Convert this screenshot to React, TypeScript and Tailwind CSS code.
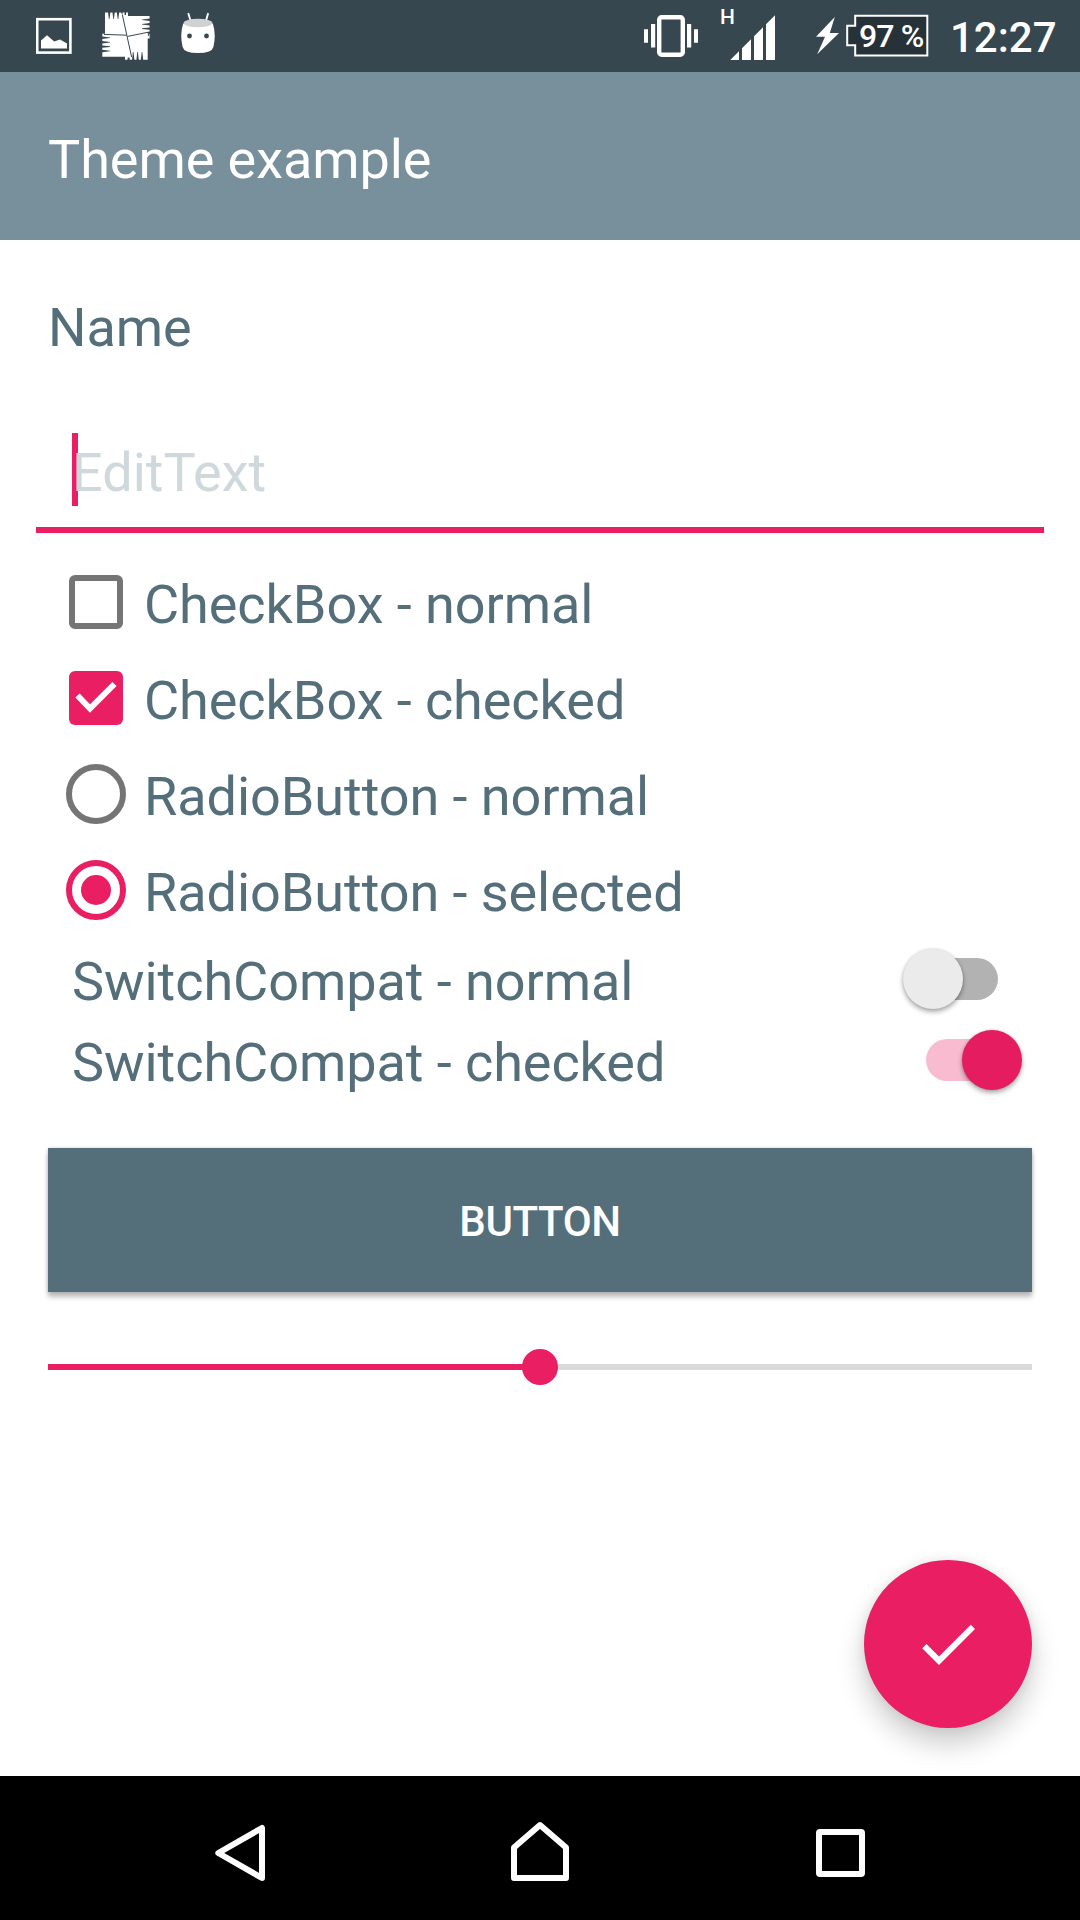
import React from "react";

const label = "text-[54px] leading-[63px] tracking-[-0.06px] text-[#546e7a] whitespace-nowrap";

function GalleryIcon() {
  return (
    <svg className="ml-9 h-[72px] w-9 shrink-0" viewBox="36 0 36 72" fill="none">
      <rect x="37.2" y="19.2" width="33.2" height="33.4" stroke="#fff" strokeWidth="2.6" />
      <path d="M41 48.6V40.5L47 35.3L54.2 41.6L60 39.4L67 43.6V48.6Z" fill="#fff" />
    </svg>
  );
}

function PatchworkIcon() {
  return (
    <svg className="ml-[30px] h-[72px] w-12 shrink-0" viewBox="102 0 48 72">
      <g fill="#fff">
        <path d="M105 12.6H128V16H149.6V38.4H147.7V59.7H125V56.8H102.3V33.8H105Z" />
      </g>
      <g fill="#37474f">
        <path d="M108 12H110.4L109.5 19H108.9ZM112.4 12H114.8L113.9 19H113.3ZM116.8 12H119.2L118.3 19H117.7ZM121 12H122.6L122.4 15.4ZM124.6 12H126V15H124.6Z" />
        <path d="M150 18.6V21L142 20.1V19.5ZM150 23V25.4L142 24.5V23.9ZM150 27.4V29.8L142 28.9V28.3ZM150 31.6V34.2L147.6 33V32Z" />
        <path d="M102 36.6V39L110 38.1V37.5ZM102 41V43.4L110 42.5V41.9ZM102 45.4V47.8L110 46.9V46.3ZM102 49.8V52.2L110 51.3V50.7Z" />
        <path d="M132 60H134.4L133.5 52H132.9ZM136.4 60H138.8L137.9 52H137.3ZM140.8 60H143.2L142.3 52H141.7ZM127.4 60H129.8L129.4 57.4H127.8Z" />
      </g>
      <path d="M122.4 15L131.6 57M104 34.4L126.8 35.2M127.6 36.4L148.4 32.2V36" fill="none" stroke="#37474f" strokeWidth="1" />
    </svg>
  );
}

function DroidIcon() {
  return (
    <svg className="ml-[30px] h-[72px] w-9 shrink-0" viewBox="180 0 36 72">
      <path d="M188.4 13.8L191 22M208 13.8L205.6 22" stroke="#fff" strokeWidth="1.9" strokeLinecap="round" />
      <path d="M183.2 23.5Q179.6 34 182.6 47Q184 53 198 53Q212 53 213.4 47Q216.4 34 212.8 23.5Z" fill="#fff" />
      <ellipse cx="198" cy="23" rx="14.4" ry="4.2" fill="#cfd1d2" />
      <circle cx="189.5" cy="36" r="2.4" fill="#37474f" />
      <circle cx="206.5" cy="36" r="2.4" fill="#37474f" />
    </svg>
  );
}

function VibrateIcon() {
  return (
    <svg className="h-[72px] w-[54px] shrink-0" viewBox="644 0 54 72">
      <rect x="659.2" y="17.2" width="23.6" height="37.6" rx="2.5" fill="none" stroke="#fff" strokeWidth="4.4" />
      <path d="M651 24h4.2v23.5H651zM687 24h4.2v23.5H687zM644 29.2h4v13.6h-4zM694 29.2h4v13.6h-4z" fill="#fff" />
    </svg>
  );
}

function SignalIcon() {
  return (
    <div className="relative ml-[21px] h-[72px] w-14 shrink-0">
      <span className="absolute top-[5px] left-px text-[21px] leading-[24px] font-medium">H</span>
      <svg className="h-[72px] w-14" viewBox="719 0 56 72" fill="#fff">
        <path d="M730.2 60L739 51.2V60ZM742 48.2L751 39.2V60H742ZM754 36.2L763 27.2V60H754ZM766 24.2L775 15.2V60H766Z" />
      </svg>
    </div>
  );
}

function Battery() {
  return (
    <>
      <svg className="ml-10 h-[72px] w-6 shrink-0" viewBox="815 0 24 72" fill="#fff">
        <path d="M834.8 17L816 36.8H825L817.2 54.2L839 33H829.8Z" />
      </svg>
      <div className="relative ml-[7px] flex h-[72px] w-[83px] shrink-0 items-center pl-[13px]">
        <svg className="absolute inset-0 h-[72px] w-[83px]" viewBox="846 0 83 72">
          <path d="M855.2 15.8H927.3V55.6H855.2V45.2H847.2V25.8H855.2Z" fill="#263238" stroke="#fff" strokeWidth="2" />
        </svg>
        <span className="relative text-[32px] leading-[36px] font-medium tracking-[-0.9px] whitespace-nowrap">97 %</span>
      </div>
    </>
  );
}

function StatusBar() {
  return (
    <div className="flex h-[72px] shrink-0 items-center bg-[#37474f] text-white">
      <GalleryIcon />
      <PatchworkIcon />
      <DroidIcon />
      <div className="flex-1" />
      <VibrateIcon />
      <SignalIcon />
      <Battery />
      <span className="mr-[23px] ml-[21px] w-[107px] pt-[4px] text-[42px] leading-[50px] font-medium whitespace-nowrap">12:27</span>
    </div>
  );
}

function CheckBox({ checked, children }: { checked?: boolean; children: React.ReactNode }) {
  return (
    <div className="flex h-24 items-center pl-[69px]">
      <svg className="size-[54px] shrink-0" viewBox="0 0 54 54" fill="none">
        {checked ? (
          <>
            <rect width="54" height="54" rx="6" fill="#e91e63" />
            <path d="M8.5 24.5L21 37.5L45.5 13" stroke="#fff" strokeWidth="6" />
          </>
        ) : (
          <path fillRule="evenodd" fill="#757575" d="M6 0H48A6 6 0 0 1 54 6V48A6 6 0 0 1 48 54H6A6 6 0 0 1 0 48V6A6 6 0 0 1 6 0ZM6 6V48H48V6Z" />
        )}
      </svg>
      <span className={`${label} ml-[21px] pt-[5px]`}>{children}</span>
    </div>
  );
}

function Radio({ selected, children }: { selected?: boolean; children: React.ReactNode }) {
  return (
    <div className="flex h-24 items-center pl-[66px]">
      <div className={`flex size-[60px] shrink-0 items-center justify-center rounded-full border-6 ${selected ? "border-[#e91e63]" : "border-[#757575]"}`}>
        {selected && <div className="size-[30px] rounded-full bg-[#e91e63]" />}
      </div>
      <span className={`${label} ml-[18px] pt-[5px]`}>{children}</span>
    </div>
  );
}

function Switch({ on, children }: { on?: boolean; children: React.ReactNode }) {
  return (
    <div className="flex h-[81px] items-start justify-between pl-[72px]">
      <span className={`${label} pt-[12px]`}>{children}</span>
      <div className={`relative mt-5 mr-[82px] h-[42px] w-[72px] rounded-full ${on ? "bg-[#f8bbd0]" : "bg-[#b2b2b2]"}`}>
        <div
          className={`absolute top-[-9.5px] size-[60px] rounded-full shadow-[0_3px_5px_rgba(0,0,0,0.32),0_0_3px_rgba(0,0,0,0.14)] ${
            on ? "left-[35.5px] bg-[#e51c60]" : "left-[-23.5px] bg-[#ebebeb]"
          }`}
        />
      </div>
    </div>
  );
}

export default function App() {
  return (
    <div className="flex h-[1920px] w-[1080px] flex-col overflow-hidden bg-white font-['Roboto',sans-serif]">
      <StatusBar />
      <header className="flex h-[168px] shrink-0 items-center bg-[#78909c] pt-[7px] pl-12">
        <h1 className="text-[54px] leading-[63px] font-normal tracking-[-0.06px] text-white">Theme example</h1>
      </header>

      <main className="flex flex-1 flex-col pt-14">
        <div className={`${label} pl-12`}>Name</div>
        <div className="mx-9 mt-[74px] flex h-[100px] items-start border-b-6 border-[#e91e63] pl-9">
          <div className="h-[73px] w-[6px] bg-[#e91e63]" />
          <span className="relative -ml-[6px] pt-2 text-[54px] leading-[63px] text-[#cfd8dc]">EditText</span>
        </div>

        <div className="mt-[21px]">
          <CheckBox>CheckBox - normal</CheckBox>
          <CheckBox checked>CheckBox - checked</CheckBox>
          <Radio>RadioButton - normal</Radio>
          <Radio selected>RadioButton - selected</Radio>
          <Switch>SwitchCompat - normal</Switch>
          <Switch on>SwitchCompat - checked</Switch>
        </div>

        <button className="mx-12 mt-12 flex h-36 shrink-0 items-center justify-center bg-[#546e7a] pt-[3px] text-[42px] leading-[50px] font-medium tracking-[-0.4px] text-white shadow-[0_5px_5px_rgba(0,0,0,0.26),0_0_4px_rgba(0,0,0,0.16)]">
          BUTTON
        </button>

        <div className="mx-12 mt-[57px] flex h-9 items-center">
          <div className="h-[6px] flex-1 bg-[#e91e63]" />
          <div className="relative -mx-[18px] size-9 rounded-full bg-[#e91e63]" />
          <div className="h-[6px] flex-1 bg-[#dadada]" />
        </div>

        <div className="mt-auto mr-12 mb-12 flex size-[168px] shrink-0 items-center justify-center self-end rounded-full bg-[#e91e63] shadow-[0_16px_28px_rgba(0,0,0,0.2),0_0_12px_rgba(0,0,0,0.08)]">
          <svg className="size-[72px]" viewBox="0 0 24 24" fill="#fff">
            <path d="M9 16.17L4.83 12l-1.42 1.41L9 19 21 7l-1.41-1.41z" />
          </svg>
        </div>
      </main>

      <nav className="flex h-36 shrink-0 items-center bg-black pl-[215px]">
        <svg className="h-[68px] w-[50px]" viewBox="215 1814 50 68" fill="none" stroke="#fff" strokeWidth="6" strokeLinejoin="round">
          <path d="M218.3 1853L262 1828V1878Z" />
        </svg>
        <svg className="ml-[246px] h-[68px] w-[58px]" viewBox="511 1814 58 68" fill="none" stroke="#fff" strokeWidth="6" strokeLinejoin="round">
          <path d="M514 1847.5L540 1825L566 1847.5V1878H514Z" />
        </svg>
        <div className="mt-[10px] ml-[247px] h-[48px] w-[49px] rounded-[4px] border-6 border-white" />
      </nav>
    </div>
  );
}
